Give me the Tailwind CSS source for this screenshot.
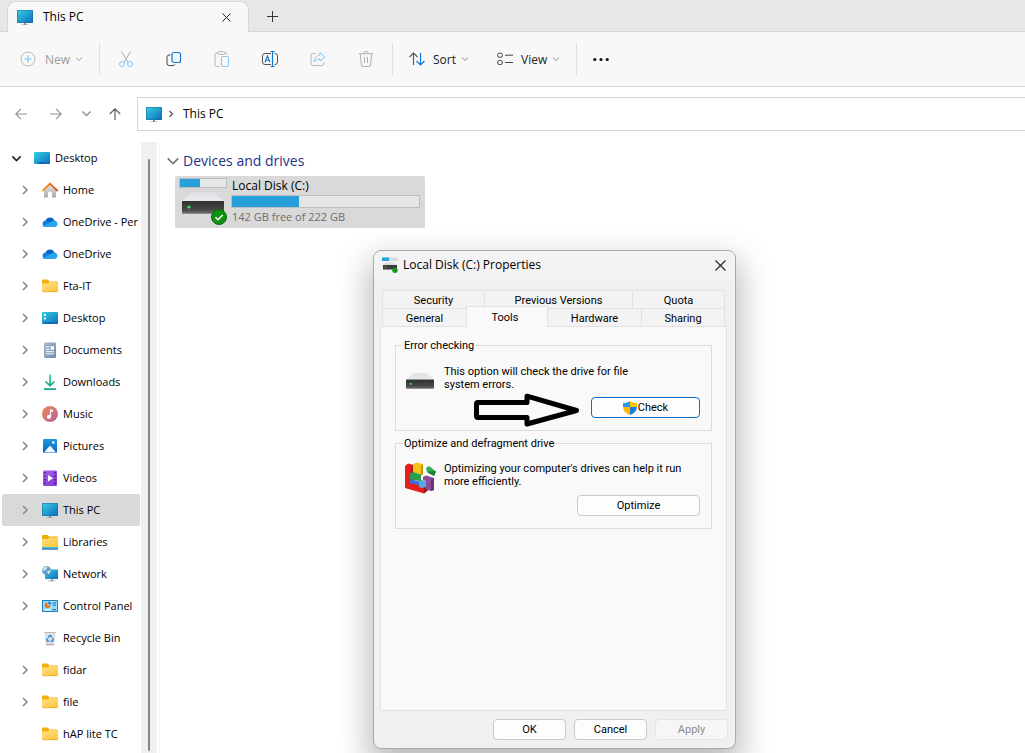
<!DOCTYPE html>
<html lang="en">
<head>
<meta charset="utf-8">
<title>This PC</title>
<script src="https://cdn.jsdelivr.net/npm/@tailwindcss/browser@4"></script>
</head>
<body class="relative flex h-screen flex-col overflow-hidden bg-white font-['Open_Sans',sans-serif] text-xs text-black">

<svg class="absolute h-0 w-0" aria-hidden="true">
  <defs>
    <linearGradient id="gScreen" x1="0" y1="0" x2="1" y2="1"><stop offset="0" stop-color="#34cde0"/><stop offset=".5" stop-color="#229fd0"/><stop offset="1" stop-color="#0f6cc0"/></linearGradient>
    <linearGradient id="gFolder" x1="0" y1="0" x2="1" y2="1"><stop offset="0" stop-color="#ffe08a"/><stop offset="1" stop-color="#fdc52f"/></linearGradient>
    <linearGradient id="gHouse" x1="0" y1="0" x2="0" y2="1"><stop offset="0" stop-color="#e4e4e4"/><stop offset="1" stop-color="#ababab"/></linearGradient>
    <linearGradient id="gRoof" x1="0" y1="0" x2="1" y2="0"><stop offset="0" stop-color="#f59a23"/><stop offset="1" stop-color="#dc4a1e"/></linearGradient>
    <linearGradient id="gDoc" x1="0" y1="0" x2="1" y2="1"><stop offset="0" stop-color="#a9bdd3"/><stop offset="1" stop-color="#7088a8"/></linearGradient>
    <linearGradient id="gMusic" x1="0" y1="0" x2="1" y2="1"><stop offset="0" stop-color="#f08a52"/><stop offset="1" stop-color="#b463a4"/></linearGradient>
    <linearGradient id="gDown" x1="0" y1="0" x2="0" y2="1"><stop offset="0" stop-color="#3bc68e"/><stop offset="1" stop-color="#13a38c"/></linearGradient>
    <linearGradient id="gPic" x1="0" y1="0" x2="0" y2="1"><stop offset="0" stop-color="#1a9be0"/><stop offset="1" stop-color="#1161b8"/></linearGradient>
    <linearGradient id="gVid" x1="0" y1="0" x2="1" y2="1"><stop offset="0" stop-color="#a866ee"/><stop offset="1" stop-color="#7c35cf"/></linearGradient>
    <linearGradient id="gTop" x1="0" y1="0" x2="0" y2="1"><stop offset="0" stop-color="#dfe0e4"/><stop offset="1" stop-color="#e9ebef"/></linearGradient>
    <linearGradient id="gBox" x1="0" y1="0" x2="0" y2="1"><stop offset="0" stop-color="#303030"/><stop offset=".7" stop-color="#484848"/><stop offset="1" stop-color="#757575"/></linearGradient>
  </defs>
  <symbol id="pc" viewBox="0 0 16 16"><rect width="16" height="13" y="1" rx=".8" fill="#146a9c"/><rect x=".6" y="1.6" width="14.8" height="11.8" rx=".4" fill="url(#gScreen)"/><path d="M7 14h2v1.400h2.500v.8h-7v-.8H7z" fill="#8c9197"/></symbol>
  <symbol id="desk" viewBox="0 0 16 16"><rect y="2" width="16" height="12" rx="1" fill="url(#gScreen)"/><path d="M4 13h11" stroke="#0b4d92" stroke-dasharray="7 1 1 1"/></symbol>
  <symbol id="desk2" viewBox="0 0 16 16"><rect y="2" width="16" height="12" rx="1" fill="url(#gScreen)"/><path d="M2 4h2v2H2zM2 7.500h2v2H2z" fill="#e9fbff"/><path d="M1 13h14" stroke="#0b4d92" stroke-dasharray="10 1 1 1"/></symbol>
  <symbol id="home" viewBox="0 0 16 16"><path d="M2 7.500 8 2l6 5.500V15a.6.6 0 0 1-.6.6H10V11.500a2 2 0 0 0-4 0v4.100H2.600A.6.6 0 0 1 2 15z" fill="url(#gHouse)"/><path d="M.9 8.500 8 1.600l7.100 6.900" fill="none" stroke="url(#gRoof)" stroke-width="1.900" stroke-linecap="round" stroke-linejoin="round"/></symbol>
  <symbol id="cloud" viewBox="0 0 16 16"><path d="M3.500 7A4.600 4.600 0 0 1 12 5.800L13 8l-5 4-6.500-1.500z" fill="#0a63c2"/><path d="M3.300 6.500a4 4 0 0 1 3.200 1L12 12.500 3.300 13A3.300 3.300 0 0 1 3.300 6.500z" fill="#1580dc"/><path d="M9.500 7.700a4.500 4.500 0 0 1 3-1.100A3.300 3.300 0 0 1 12.800 13.100H3.200a3 3 0 0 1-2.300-1.200z" fill="#2aa4ee"/></symbol>
  <symbol id="folder" viewBox="0 0 16 16"><path d="M0 2.500A1 1 0 0 1 1 1.500h4.700L7.500 3.500H15a1 1 0 0 1 1 1V8H0z" fill="#eeae0d"/><path d="M0 5.500h5.500L7.500 4H16v9.200a.8.800 0 0 1-.8.800H.8a.8.800 0 0 1-.8-.8z" fill="url(#gFolder)"/><path d="M.5 13.700h15" stroke="#dfa314" stroke-width=".7"/></symbol>
  <symbol id="lib" viewBox="0 0 16 16"><path d="M0 2a1 1 0 0 1 1-1h4.700L7.500 2.500H15a1 1 0 0 1 1 1V7H0z" fill="#eeae0d"/><path d="M0 5h5.500L7.500 3.500H16V13H0z" fill="url(#gFolder)"/><path d="M0 13h16v1.300H0z" fill="#3ac5e8"/><path d="M0 14.300h16v1.300H0z" fill="#1464a8"/></symbol>
  <symbol id="doc" viewBox="0 0 16 16"><rect x="2" y=".5" width="12" height="15.500" rx="1.200" fill="url(#gDoc)"/><path d="M4 5h3.500M4 7.500h3.500M4 9.700h8M4 11.900h8" stroke="#fff"/><path d="M8.700 4.300H12v3.400H8.700z" fill="#fff"/></symbol>
  <symbol id="down" viewBox="0 0 16 16"><path d="M7.200.5h1.700v9.300l3-3 1.200 1.200L8 13 2.900 8l1.200-1.200 3.100 3zM2 14.300h12V16H2z" fill="url(#gDown)"/></symbol>
  <symbol id="music" viewBox="0 0 16 16"><circle cx="8" cy="8" r="8" fill="url(#gMusic)"/><path d="M8 3.200 11 4v2L9 5.500v5.200a2 2 0 1 1-1.200-1.800z" fill="#fff"/></symbol>
  <symbol id="pic" viewBox="0 0 16 16"><rect x="1" y="1" width="14" height="14" rx="1.200" fill="url(#gPic)"/><path d="M2 14.500 7.300 8.300a1 1 0 0 1 1.400 0L14 14.500z" fill="#f1f8ff"/><circle cx="11.300" cy="4.500" r="1.200" fill="#fff"/></symbol>
  <symbol id="vid" viewBox="0 0 16 16"><rect x="1" y=".5" width="14" height="15.500" rx="1.200" fill="url(#gVid)"/><path d="M6 5v6.500l5-3.200z" fill="#fff"/><path d="M3 2v13M13 2v13" stroke="#3e1472" stroke-width="1.400" stroke-dasharray="1.500 2"/></symbol>
  <symbol id="net" viewBox="0 0 16 16"><rect x="3" y="3.500" width="13" height="9.500" rx=".6" fill="url(#gScreen)"/><path d="M9 13h1.500v1.500H13v.8H6.500v-.8H9z" fill="#8c9197"/><circle cx="4.600" cy="4.600" r="4.500" fill="#5f9cc6"/><path d="M2 1.500q2-1.500 3.500-.8L4.800 3l-2.500 2L.4 4zM5 5.500l3-1.500.7 1.500L6.500 8.200z" fill="#c9e2ee"/></symbol>
  <symbol id="panel" viewBox="0 0 16 16"><rect y="2" width="16" height="12" rx=".5" fill="#1b7fc0"/><rect x="1" y="3" width="14" height="10" fill="#97e0fb"/><path d="M5.500 4.300v3h3a3 3 0 1 1-3-3z" fill="#e8762b"/><path d="M6.500 3.600a3 3 0 0 1 2.700 2.700H6.500z" fill="#1262b3"/><path d="M10.500 5H14M10.500 7.200H14" stroke="#1262b3"/><path d="M3 11.700h6" stroke="#fff"/><path d="M10 11.700h4" stroke="#1262b3"/></symbol>
  <symbol id="bin" viewBox="0 0 16 16"><path d="M2.500 2h11L12.300 14.500a1 1 0 0 1-1 .8H4.700a1 1 0 0 1-1-.8z" fill="#dcdfe2"/><path d="M2.200 2h11.600v1H2.200z" fill="#b9bdc1"/><path d="M4 14h8v1.300H4.500z" fill="#a9adb1"/><path d="M6.200 7.600 7.500 5.700h1.200L9.800 7.300M10.500 8.300l.8 1.500-.9 1.300H8.600M7.200 11.100H5.500l-.8-1.300.8-1.400" fill="none" stroke="#1b7fd1" stroke-width="1.300"/></symbol>
  <symbol id="chev" viewBox="0 0 8 8"><path d="M1 2.500 4 5.500 7 2.500" fill="none" stroke="currentColor"/></symbol>
  <symbol id="chevR" viewBox="0 0 8 10"><path d="M2 1 6 5 2 9" fill="none" stroke="currentColor" stroke-width="1.600"/></symbol>
  <symbol id="disk" viewBox="0 0 42 22"><path d="M11 0h20l11 9H0z" fill="url(#gTop)"/><path d="M0 9h42v12a.7.7 0 0 1-.7.700H.7A.7.7 0 0 1 0 21z" fill="url(#gBox)"/><circle cx="7" cy="15" r="1.600" fill="#3ce25c"/></symbol>
</svg>

<header class="flex h-8 shrink-0 items-end border-b border-[#d5d5d5] bg-[#e7e7e7]">
  <div class="relative -mb-px ml-[7px] flex h-[31px] w-[242px] items-center rounded-t-lg border border-b-0 border-[#d8d8d8] bg-[#f8f8f8] pr-[17px] pl-[9px]">
    <svg class="h-4 w-4"><use href="#pc"/></svg>
    <span class="ml-[10px] flex-1">This PC</span>
    <button aria-label="Close tab"><svg class="h-[9px] w-[9px]" viewBox="0 0 9 9"><path d="m.5.5 8 8m0-8-8 8" stroke="#222"/></svg></button>
  </div>
  <button class="mb-[9px] ml-[18px]" aria-label="New tab"><svg class="h-[11px] w-[11px]" viewBox="0 0 11 11"><path d="M5.500 0v11M0 5.500h11" stroke="#333"/></svg></button>
</header>

<div role="toolbar" class="flex h-[55px] shrink-0 items-center border-b border-[#d3d3d3] bg-[#f8f8f8] pl-5 text-[#222]">
  <button disabled class="flex w-[63px] items-center text-[#9a9a9a]">
    <svg class="h-4 w-4" viewBox="0 0 16 16" fill="none"><circle cx="8" cy="8" r="7" stroke="#b5b5b5"/><path d="M8 4.500v7M4.500 8h7" stroke="#7cbdf0"/></svg>
    <span class="ml-[9px] flex-1 pt-[2px] text-left">New</span><svg class="h-2 w-2"><use href="#chev"/></svg>
  </button>
  <div class="ml-4 h-8 w-px bg-[#e2e2e2]"></div>
  <div class="ml-[2px] flex">
    <button disabled aria-label="Cut" class="flex w-12 justify-center"><svg class="h-4 w-4" viewBox="0 0 16 16" fill="none"><path d="m3.500.5 6.400 10.700M12.500.5 6.100 11.200" stroke="#b0b0b0"/><circle cx="4" cy="13" r="2.500" stroke="#86c6f2"/><circle cx="12" cy="13" r="2.500" stroke="#86c6f2"/></svg></button>
    <button aria-label="Copy" class="flex w-12 justify-center"><svg class="h-4 w-4" viewBox="0 0 16 16" fill="none"><path d="M4.500 4H3.300A2.300 2.300 0 0 0 1 6.300v6A2.300 2.300 0 0 0 3.300 14.600H7a2 2 0 0 0 1.900-1.300" stroke="#444"/><rect x="6" y="1.500" width="8.500" height="10" rx="2" stroke="#0b78d4" stroke-width="1.200"/></svg></button>
    <button disabled aria-label="Paste" class="flex w-12 justify-center"><svg class="h-4 w-4" viewBox="0 0 16 16" fill="none"><path d="M4 2H2.500A1.500 1.500 0 0 0 1 3.500v10A1.500 1.500 0 0 0 2.500 15.500H5M11 2h.5A1.500 1.500 0 0 1 13 3.500" stroke="#b5b5b5"/><rect x="4" y=".6" width="7" height="2.800" rx="1.400" stroke="#b5b5b5"/><rect x="7.500" y="5.500" width="7" height="10" rx="1" stroke="#86c6f2"/></svg></button>
    <button aria-label="Rename" class="flex w-12 justify-center"><svg class="h-4 w-4" viewBox="0 0 16 16" fill="none"><path d="M9 2.500H3A2.500 2.500 0 0 0 .5 5v6A2.500 2.500 0 0 0 3 13.500h6M12.500 2.500H13A2.500 2.500 0 0 1 15.500 5v6a2.500 2.500 0 0 1-2.500 2.500h-.5" stroke="#555"/><path d="M10.500.5v15M8.500.5h4M8.500 15.500h4" stroke="#0b78d4" stroke-width="1.200"/><path d="M3 11.200 5.500 5 8 11.200M3.900 9.300h3.200" stroke="#0b78d4" stroke-width="1.100"/></svg></button>
    <button disabled aria-label="Share" class="flex w-12 justify-center"><svg class="h-4 w-4" viewBox="0 0 16 16" fill="none"><path d="M5.500 2.500H3.300A2.300 2.300 0 0 0 1 4.800v7.400a2.300 2.300 0 0 0 2.300 2.300h8.400a2.300 2.300 0 0 0 2.300-2.300V11" stroke="#b5b5b5"/><path d="m10 1.500 5 4.500-5 4.300V8C7 7.800 5.500 9 4 11c0-3.500 2-6.500 6-7z" stroke="#86c6f2" stroke-linejoin="round"/></svg></button>
    <button disabled aria-label="Delete" class="flex w-12 justify-center"><svg class="h-4 w-4" viewBox="0 0 16 16" fill="none" stroke="#b0b0b0"><path d="M.8 2.700h14.400M5.800 2.500a2.200 2.200 0 0 1 4.400 0M2.300 3l1.100 11a1.700 1.700 0 0 0 1.700 1.500h5.800a1.700 1.700 0 0 0 1.700-1.500l1.100-11M6.500 6v6M9.500 6v6"/></svg></button>
  </div>
  <div class="ml-[2px] h-8 w-px bg-[#e2e2e2]"></div>
  <button class="ml-4 flex w-[60px] items-center">
    <svg class="h-4 w-4" viewBox="0 0 16 16" fill="none"><path d="M4.500 14V2M.5 6l4-4 4 4" stroke="#555" stroke-width="1.100"/><path d="M11.500 2v12m-4-4 4 4 4-4" stroke="#0b78d4" stroke-width="1.200"/></svg>
    <span class="ml-2 flex-1 pt-[2px] text-left">Sort</span><svg class="h-2 w-2 text-[#888]"><use href="#chev"/></svg>
  </button>
  <button class="ml-7 flex w-[63px] items-center">
    <svg class="h-4 w-4" viewBox="0 0 16 16" fill="none" stroke="#444"><rect x=".7" y="2.200" width="4.600" height="4" rx="1.500"/><rect x=".7" y="9.500" width="4.600" height="4" rx="1.500"/><path d="M8 4.200h8M8 11.500h8"/></svg>
    <span class="ml-2 flex-1 pt-[2px] text-left">View</span><svg class="h-2 w-2 text-[#888]"><use href="#chev"/></svg>
  </button>
  <div class="ml-4 h-8 w-px bg-[#e2e2e2]"></div>
  <button class="ml-4" aria-label="More"><svg class="h-4 w-4" viewBox="0 0 16 16" fill="#111"><circle cx="1.800" cy="8.500" r="1.600"/><circle cx="8" cy="8.500" r="1.600"/><circle cx="14.200" cy="8.500" r="1.600"/></svg></button>
</div>

<div class="flex h-[55px] shrink-0 items-center pb-[2px] pl-[15px]">
  <button aria-label="Back"><svg class="h-3 w-3" viewBox="0 0 12 12" fill="none" stroke="#8f8f8f" stroke-width="1.100"><path d="M12 6H.8M6 .8.800 6 6 11.200"/></svg></button>
  <button aria-label="Forward" class="ml-[23px]"><svg class="h-3 w-3" viewBox="0 0 12 12" fill="none" stroke="#8f8f8f" stroke-width="1.100"><path d="M0 6h11.200M6 .8 11.200 6 6 11.200"/></svg></button>
  <button aria-label="Recent" class="ml-[19px]"><svg class="h-[11px] w-[11px] text-[#8f8f8f]"><use href="#chev"/></svg></button>
  <button aria-label="Up" class="ml-[17px]"><svg class="h-3 w-3" viewBox="0 0 12 12" fill="none" stroke="#5c5c5c" stroke-width="1.200"><path d="M6 12V.8M.8 6 6 .8 11.200 6"/></svg></button>
  <div class="ml-4 flex h-[34px] flex-1 items-center border border-r-0 border-[#d5d5d5] pl-2">
    <svg class="h-4 w-4"><use href="#pc"/></svg>
    <svg class="ml-[6px] h-2 w-[6px] text-[#555]"><use href="#chevR"/></svg>
    <a href="#" class="ml-[9px]">This PC</a>
  </div>
</div>

<div class="flex min-h-0 flex-1">
  <nav id="tree" class="w-[141px] shrink-0 overflow-hidden pr-px pl-[2px] text-[11px]"></nav>
  <div class="w-4 shrink-0 bg-[#f0f0f0] pt-[17px] pb-[2px]"><div class="mx-auto h-full w-[2px] rounded bg-[#858585]"></div></div>
  <main class="ml-[2px] flex-1 border-l border-[#f3f3f3] pt-[9px]">
    <h2 class="flex items-center pl-[6px] text-sm leading-5 text-[#1e3287]">
      <svg class="mr-[3px] h-[14px] w-[14px] text-[#777]"><use href="#chev"/></svg>Devices and drives
    </h2>
    <a href="#" class="mt-[5px] ml-[15px] flex h-[52px] w-[250px] rounded-xs bg-[#d9d9d9] pt-[2px] pl-1">
      <div class="relative w-12">
        <div class="h-[10px] border border-[#bcbcbc] bg-[#e6e6e6]"><div class="h-full w-5 bg-[#26a0da]"></div></div>
        <svg class="mt-[4px] ml-[3px] h-[22px] w-[42px]"><use href="#disk"/></svg>
        <svg class="absolute top-[31px] left-8 h-4 w-4" viewBox="0 0 16 16"><circle cx="8" cy="8" r="7.500" fill="#0f9212" stroke="#0a6b0d"/><path d="m4.500 8.300 2.500 2.400L11.700 6" fill="none" stroke="#fff" stroke-width="1.500"/></svg>
      </div>
      <div class="ml-1 w-[189px]">
        <p class="pl-px leading-4">Local Disk (C:)</p>
        <div class="mt-px h-[13px] border border-[#bcbcbc] bg-[#e6e6e6]"><div class="h-full w-[67px] bg-[#26a0da]"></div></div>
        <p class="pt-px pl-px text-[11px] leading-4 text-[#6d6d6d]">142 GB free of 222 GB</p>
      </div>
    </a>
  </main>
</div>

<section role="dialog" aria-label="Local Disk (C:) Properties" class="absolute top-[250px] left-[373px] w-[363px] rounded-lg border border-[#a9a9a9] bg-[#f0f0f0] pb-2 font-[Roboto,sans-serif] text-[11px] leading-[13px] shadow-[0_14px_32px_4px_rgba(0,0,0,0.28)]">
  <div class="flex h-7 items-center rounded-t-lg bg-[#f3f3f3] pr-[9px] pl-2 font-['Open_Sans',sans-serif] text-xs">
    <svg class="h-4 w-4" viewBox="0 0 16 16"><path d="M0 .5h16v3.500H0z" fill="#d9dadb"/><path d="M0 .5h7v3.500H0z" fill="#26a0da"/><path d="M4 5.500h8l3 2.500H1z" fill="#dcdee2"/><path d="M1 8h14v4.500H1z" fill="#3b3b3b"/><circle cx="3.500" cy="10" r=".7" fill="#3ce25c"/><circle cx="13" cy="13.200" r="2.700" fill="#12981a"/></svg>
    <h1 class="ml-[5px] flex-1">Local Disk (C:) Properties</h1>
    <button aria-label="Close"><svg class="h-[11px] w-[11px]" viewBox="0 0 11 11"><path d="m.5.500 10 10m0-10-10 10" stroke="#222" stroke-width="1.100"/></svg></button>
  </div>
  <div class="pt-[11px] pr-2 pl-[6px]">
    <div role="tablist" class="mx-[2px]">
      <div class="flex h-[18px]">
        <button role="tab" class="w-[102px] border border-r-0 border-b-0 border-[#e2e2e2] bg-[#f3f3f3] pt-[2px]">Security</button>
        <button role="tab" class="flex-1 border border-r-0 border-b-0 border-[#e2e2e2] bg-[#f3f3f3] pt-[2px]">Previous Versions</button>
        <button role="tab" class="w-[93px] border border-b-0 border-[#e2e2e2] bg-[#f3f3f3] pt-[2px]">Quota</button>
      </div>
      <div class="flex h-[18px] items-end">
        <button role="tab" class="h-[18px] flex-1 border border-r-0 border-b-0 border-[#e2e2e2] bg-[#f3f3f3] pt-[2px]">General</button>
        <button role="tab" aria-selected="true" class="relative -mb-px h-[21px] w-[82px] border border-b-0 border-[#e2e2e2] bg-[#f9f9f9] pr-1">Tools</button>
        <button role="tab" class="h-[18px] w-[93px] border border-x-0 border-b-0 border-[#e2e2e2] bg-[#f3f3f3] pt-[2px]">Hardware</button>
        <button role="tab" class="h-[18px] w-[84px] border border-b-0 border-[#e2e2e2] bg-[#f3f3f3] pt-[2px]">Sharing</button>
      </div>
    </div>
    <div role="tabpanel" class="min-h-[385px] border border-[#e2e2e2] bg-[#f9f9f9] px-[14px] pt-3">
      <fieldset class="h-[92px] border border-[#dcdcdc] px-[7px]">
        <legend class="px-px">Error checking</legend>
        <div class="mt-[13px] flex">
          <svg class="mt-2 ml-[3px] h-4 w-7" viewBox="0 0 42 22" preserveAspectRatio="none"><use href="#disk"/></svg>
          <p class="ml-[10px] w-[190px]">This option will check the drive for file system errors.</p>
        </div>
        <button class="mt-[6px] mr-1 ml-auto flex h-[21px] w-[109px] items-center justify-center rounded border border-[#0a6fc4] bg-[#fdfdfd]">
          <svg class="mr-px h-[14px] w-[14px]" viewBox="0 0 14 14"><path d="M7 0C5 1.500 3 2 0 2v4h7z" fill="#2a9bea"/><path d="M7 0c2 1.500 4 2 7 2v4H7z" fill="#fdc50a"/><path d="M0 6h7v8C3 12.500.3 10 0 6z" fill="#fdbb06"/><path d="M14 6H7v8c4-1.500 6.700-4 7-8z" fill="#1f7fd6"/></svg>Check
        </button>
      </fieldset>
      <fieldset class="mt-[6px] h-[92px] border border-[#dcdcdc] px-[7px]">
        <legend class="px-px">Optimize and defragment drive</legend>
        <div class="mt-3 flex">
          <svg class="ml-[2px] h-8 w-[31px]" viewBox="0 0 31 32"><path d="M0 4 3 1.500 9 3v17l10 3 4-2v7l-4 3.500L0 26z" fill="#e3201f"/><path d="M19 25l4-3v6l-4 3.500z" fill="#a31515"/><path d="M6 4 9 2v18l-3 1z" fill="#b51a18"/><path d="M8 2 12 .5l6 1.800V13L8 10z" fill="#f6c414"/><path d="m16 3.500 2-1.200V13h-2z" fill="#c79305"/><path d="m5 12 3-2 8 2.500v7L5 17z" fill="#27a04b"/><path d="m5 17 11 3v4L5 21z" fill="#3b6ee0"/><path d="m14 20 3-2 4 1.200V25l-4 1-3-1z" fill="#58a8e2"/><path d="m18 15 3-1.500 8 2.500v12l-3 1-5-1.500V19l-3-1z" fill="#8b4c98"/><path d="m26 17 3-1v12l-3 1z" fill="#69347a"/><path d="m21 6 3-2 7 5.500-2 4.500-7-4z" fill="#2fae56"/><path d="m22 10 7 4 2-4.500-3-.5z" fill="#1e7f3c"/></svg>
          <p class="ml-2 w-[240px]">Optimizing your computer's drives can help it run<br>more efficiently.</p>
        </div>
        <button class="mt-px mr-1 ml-auto block h-[21px] w-[123px] rounded border border-[#cacaca] bg-[#fdfdfd]">Optimize</button>
      </fieldset>
    </div>
    <div class="mt-2 flex justify-end gap-2">
      <button class="h-[21px] w-[73px] rounded border border-[#cacaca] bg-[#fdfdfd]">OK</button>
      <button class="h-[21px] w-[73px] rounded border border-[#cacaca] bg-[#fdfdfd]">Cancel</button>
      <button disabled class="-mr-px h-[21px] w-[73px] rounded border border-[#e6e6e6] bg-[#f6f6f6] text-[#8b8b8b]">Apply</button>
    </div>
  </div>
  <svg class="absolute top-[142px] left-[99px] h-[35px] w-[108px]" viewBox="0 0 108 35" aria-hidden="true"><path d="M5 9.500h49v-6.300L103.500 17.500 54 31v-6.500H5a1.500 1.500 0 0 1-1.500-1.500V11A1.500 1.500 0 0 1 5 9.500z" fill="none" stroke="#000" stroke-width="5" stroke-linejoin="round"/></svg>
</section>

<script>
const items = [
  ['Home', 'home', 1], ['OneDrive - Per', 'cloud', 1], ['OneDrive', 'cloud', 1], ['Fta-IT', 'folder', 1],
  ['Desktop', 'desk2', 1], ['Documents', 'doc', 1], ['Downloads', 'down', 1], ['Music', 'music', 1],
  ['Pictures', 'pic', 1], ['Videos', 'vid', 1], ['This PC', 'pc', 1], ['Libraries', 'lib', 1], ['Network', 'net', 1],
  ['Control Panel', 'panel', 1], ['Recycle Bin', 'bin', 0], ['fidar', 'folder', 1], ['file', 'folder', 1], ['hAP lite TC', 'folder', 0]
];
const arrow = '<svg class="h-[10px] w-2"><use href="#chevR"/></svg>';
document.getElementById('tree').innerHTML =
  '<a href="#" class="flex h-8 items-center pl-[9px]"><svg class="h-[11px] w-[11px]" viewBox="0 0 8 8"><path d="M1 2.500 4 5.500 7 2.500" fill="none" stroke="#222" stroke-width="1.200"/></svg><svg class="ml-3 h-4 w-4"><use href="#desk"/></svg><span class="ml-[5px]">Desktop</span></a>' +
  items.map(([name, icon, more]) =>
    `<a href="#" class="flex h-8 items-center rounded-xs pl-[19px] whitespace-nowrap ${name === 'This PC' ? 'bg-[#d9d9d9]' : ''}"><span class="w-[21px] shrink-0 text-[#8a8a8a]">${more ? arrow : ''}</span><svg class="h-4 w-4 shrink-0"><use href="#${icon}"/></svg><span class="ml-[5px]">${name}</span></a>`
  ).join('');
</script>
</body>
</html>
